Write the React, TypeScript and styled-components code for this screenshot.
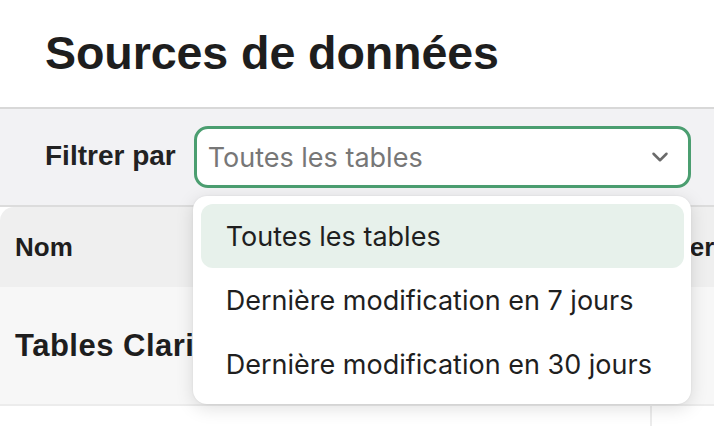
import * as React from 'react';
import styled, { createGlobalStyle } from 'styled-components';
import { ChevronDown } from 'lucide-react';

const GlobalStyle = createGlobalStyle`
  html, body {
    margin: 0;
    padding: 0;
    background: #ffffff;
    overflow: hidden;
  }
  body {
    font-family: 'Liberation Sans', Arial, sans-serif;
    color: #1f1f1f;
  }
`;

const options = [
  'Toutes les tables',
  'Dernière modification en 7 jours',
  'Dernière modification en 30 jours',
];

const App: React.FC = () => {
  const [selected, setSelected] = React.useState(0);
  const [open, setOpen] = React.useState(true);

  return (
    <Page>
      <GlobalStyle />
      <Header>
        <h1>Sources de données</h1>
      </Header>

      <FilterBar>
        <label>Filtrer par</label>
        <SelectWrap>
          <SelectBox onClick={() => setOpen(!open)}>
            <span>{options[selected]}</span>
            <ChevronDown size={26} strokeWidth={2.3} color="#6a6a6a" />
          </SelectBox>

          {open && (
            <Menu>
              {options.map((option, i) => (
                <MenuItem
                  key={option}
                  $active={i === selected}
                  onClick={() => {
                    setSelected(i);
                    setOpen(false);
                  }}
                >
                  {option}
                </MenuItem>
              ))}
            </Menu>
          )}
        </SelectWrap>
      </FilterBar>

      <Table>
        <HeadRow>
          <Cell>Nom</Cell>
          <Cell $inset>Dernière modification</Cell>
        </HeadRow>
        <BodyRow $shade>
          <Cell $big>Tables Clarisse</Cell>
          <Cell />
        </BodyRow>
        <BodyRow>
          <Cell />
          <Cell />
        </BodyRow>
      </Table>
    </Page>
  );
};

const Page = styled.div`
  width: 714px;
  height: 426px;
  overflow: hidden;
`;

const Header = styled.header`
  height: 107px;
  padding-left: 45px;
  display: flex;
  align-items: center;
  border-bottom: 2px solid #d8d8d8;
  h1 {
    margin: 0;
    padding-bottom: 2px;
    font-size: 46.6px;
    font-weight: 700;
    color: #1e1e1e;
    letter-spacing: -0.1px;
  }
`;

const FilterBar = styled.div`
  height: 96px;
  padding-left: 45px;
  display: flex;
  align-items: center;
  gap: 18px;
  background: #f2f2f4;
  border-bottom: 2px solid #dcdcdc;
  label {
    font-size: 28px;
    font-weight: 700;
    color: #222222;
    padding-bottom: 2px;
  }
`;

const SelectWrap = styled.div`
  position: relative;
`;

const SelectBox = styled.div`
  width: 497px;
  height: 62px;
  box-sizing: border-box;
  border: 3px solid #4b9e70;
  border-radius: 14px;
  background: #ffffff;
  display: flex;
  align-items: center;
  justify-content: space-between;
  padding: 0 15px 0 11px;
  cursor: pointer;
  span {
    font-family: 'Inter', 'Noto Sans', sans-serif;
    font-size: 27px;
    color: #777777;
  }
`;

const Menu = styled.ul`
  position: absolute;
  top: 70px;
  left: -1px;
  width: 498px;
  box-sizing: border-box;
  margin: 0;
  padding: 8px 7px 8px 8px;
  list-style: none;
  background: #ffffff;
  border-radius: 14px;
  box-shadow: 0 4px 18px rgba(0, 0, 0, 0.13), 0 0 2px rgba(0, 0, 0, 0.08);
  z-index: 10;
`;

const MenuItem = styled.li<{ $active?: boolean }>`
  height: 64px;
  display: flex;
  align-items: center;
  padding-left: 25px;
  border-radius: 12px;
  font-family: 'Inter', 'Noto Sans', sans-serif;
  font-size: 27px;
  color: #1f1f1f;
  background: ${({ $active }) => ($active ? '#e7f1eb' : 'transparent')};
  cursor: pointer;
`;

const Table = styled.div`
  border-top-left-radius: 14px;
  overflow: hidden;
`;

const HeadRow = styled.div`
  height: 80px;
  display: grid;
  grid-template-columns: 650px 1fr;
  background: #efefef;
  font-size: 26px;
  font-weight: 700;
`;

const BodyRow = styled.div<{ $shade?: boolean }>`
  height: 117px;
  display: grid;
  grid-template-columns: 650px 1fr;
  background: ${({ $shade }) => ($shade ? '#f7f7f7' : '#ffffff')};
  border-bottom: 2px solid #ececec;
  & > div + div {
    border-left: ${({ $shade }) => ($shade ? 'none' : '2px solid #ececec')};
  }
`;

const Cell = styled.div<{ $big?: boolean; $inset?: boolean }>`
  display: flex;
  align-items: center;
  padding-left: ${({ $inset }) => ($inset ? '21px' : '15px')};
  white-space: nowrap;
  overflow: hidden;
  font-size: ${({ $big }) => ($big ? '31px' : 'inherit')};
  letter-spacing: ${({ $big }) => ($big ? '0.5px' : 'normal')};
  font-weight: 700;
  color: #1e1e1e;
`;

export default App;
